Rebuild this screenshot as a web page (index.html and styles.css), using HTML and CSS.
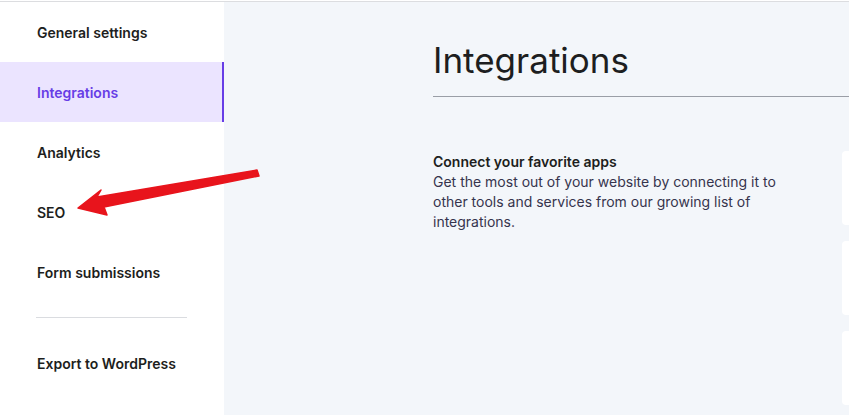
FILE: index.html
```html
<!DOCTYPE html>
<html lang="en">
<head>
    <meta charset="UTF-8">
    <meta name="viewport" content="width=device-width, initial-scale=1.0">
    <title>Integrations</title>
    <link rel="stylesheet" href="styles.css">
</head>
<body>
    <div class="page">
        <aside class="sidebar">
            <a class="nav-item" href="#">General settings</a>
            <a class="nav-item active" href="#">Integrations</a>
            <a class="nav-item" href="#">Analytics</a>
            <a class="nav-item" href="#">SEO</a>
            <a class="nav-item" href="#">Form submissions</a>
            <div class="divider"></div>
            <a class="nav-item" href="#">Export to WordPress</a>
        </aside>

        <main class="content">
            <h1 class="title">Integrations</h1>
            <div class="section">
                <div class="intro">
                    <h2>Connect your favorite apps</h2>
                    <p>Get the most out of your website by connecting it to other tools and services from our growing list of integrations.</p>
                </div>
                <div class="cards">
                    <div class="card"></div>
                    <div class="card"></div>
                    <div class="card"></div>
                </div>
            </div>
        </main>

        <!-- annotation arrow over the screenshot -->
        <svg class="arrow" width="849" height="415" viewBox="0 0 849 415">
            <polygon points="78,208 101,190 97,197 257,170 259,176 104,207 107,215" fill="#e8141c" stroke="#e8141c" stroke-width="1.5" stroke-linejoin="round"/>
        </svg>
    </div>
</body>
</html>
```

FILE: styles.css
```css
body {
    margin: 0;
    font-family: Inter, "Noto Sans", sans-serif;
    color: #1d1e20;
    background-color: #ffffff;
}

.page {
    position: relative;
    display: flex;
    min-height: 415px;
    border-top: 1px solid #dcdde0;
    margin-top: 1px;
    overflow: hidden;
}

.sidebar {
    width: 224px;
    flex-shrink: 0;
    background-color: #ffffff;
    display: flex;
    flex-direction: column;
}

.nav-item {
    height: 60px;
    display: flex;
    align-items: center;
    padding-left: 37px;
    font-size: 14px;
    font-weight: 600;
    color: #1d1e20;
    text-decoration: none;
}

.nav-item.active {
    background-color: #ebe4ff;
    color: #673de6;
    box-shadow: inset -2px 0 0 #673de6;
}

.divider {
    margin: 15px 37px 15px 36px;
    width: 151px;
    height: 1px;
    background-color: #dadce0;
}

.content {
    flex: 1;
    background-color: #f3f6fa;
    padding: 36px 0 0 209px;
}

.title {
    margin: 0;
    font-size: 35px;
    font-weight: 400;
    line-height: 44px;
    padding-bottom: 14px;
    border-bottom: 1px solid #9a9ea6;
}

.section {
    display: flex;
    gap: 61px;
    margin-top: 55px;
}

.intro {
    width: 348px;
    flex-shrink: 0;
}

.intro h2 {
    margin: 0;
    font-size: 14px;
    font-weight: 600;
    line-height: 20px;
}

.intro p {
    margin: 0;
    font-size: 14px;
    line-height: 20px;
    color: #36344d;
}

.cards {
    flex: 1;
    display: flex;
    flex-direction: column;
    gap: 16px;
    margin-top: -1px;
}

.card {
    height: 74px;
    width: 300px;
    background-color: #ffffff;
    border-radius: 4px;
}

.arrow {
    position: absolute;
    left: 0;
    top: -2px;
    pointer-events: none;
}
```
